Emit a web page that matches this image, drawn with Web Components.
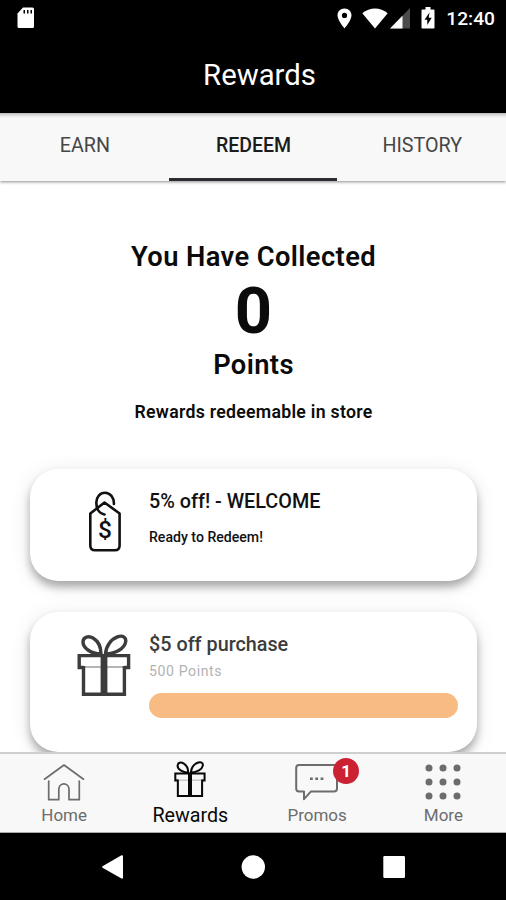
<!DOCTYPE html>
<html lang="en">
<head>
<meta charset="utf-8">
<title>Rewards</title>
<style>
	html, body {
		margin: 0;
		height: 100%;
		overflow: hidden;
		background: #fff;
		font-family: Roboto, "Liberation Sans", sans-serif;
	}
</style>
</head>
<body>
<rewards-app></rewards-app>

<script>
// shared icon markup
const icons = {
	gift: `
		<svg viewBox="0 0 54 62" preserveAspectRatio="none" fill="none" stroke="currentColor" stroke-width="3.4">
			<path d="M24 20C14 20 6 14 6 8C6 2.5 12 1.6 16 4C21 7 24 13 24 20Z"/>
			<path d="M28.5 20C29 12 34 5 41 2.6C46 1 49.5 3.5 48.6 8C47.5 14.5 39 19.5 28.5 20Z"/>
			<path d="M8 33H46" stroke="#b5b5b5" stroke-width="1.8"/>
			<path d="M6.5 33.5H2.2V21.6H51.6V33.5H47.4"/>
			<path d="M6.5 32V60.2H47.4V32"/>
			<path d="M27 20V61" stroke-width="6.8"/>
		</svg>`,
	tag: `
		<svg viewBox="0 0 54 64" fill="none" stroke="currentColor" stroke-width="2.6" stroke-linecap="round" stroke-linejoin="round">
			<path d="M27.5 12.5L42.6 23.5V55.5Q42.6 60.3 37.8 60.3H18.1Q13.3 60.3 13.3 55.5V23.5Z"/>
			<path d="M36.9 14C37.2 7.5 33 2.7 28 2.7C23 2.7 19.3 7 19.3 12.5C19.3 18.5 22 23.5 27.5 24.5"/>
			<text x="28" y="48" text-anchor="middle" font-size="24.5" font-weight="500" fill="currentColor" stroke="none">$</text>
		</svg>`,
	home: `
		<svg viewBox="0 0 42 38" fill="none" stroke="currentColor" stroke-width="1.7" stroke-linecap="round" stroke-linejoin="round">
			<path d="M1.5 16.2L21 2L40.5 16.2"/>
			<path d="M5.7 18V36.7H15.8V26.5C15.8 19 26 19 26 26.5V36.7H36.3V18"/>
		</svg>`,
	chat: `
		<svg viewBox="0 0 44 38" fill="none" stroke="currentColor" stroke-width="2" stroke-linejoin="round">
			<path d="M4 2H39Q42 2 42 5V25.5Q42 28.4 39 28.4H16L9 36.2V28.4H4Q1.2 28.4 1.2 25.5V5Q1.2 2 4 2Z"/>
			<path d="M15 15.7H17.8M20.3 15.7H23.1M25.6 15.7H28.4" stroke-width="2.4"/>
		</svg>`,
	more: `
		<svg viewBox="0 0 36 36" fill="currentColor">
			<circle cx="4" cy="4" r="3.5"/><circle cx="18" cy="4" r="3.5"/><circle cx="32" cy="4" r="3.5"/>
			<circle cx="4" cy="18" r="3.5"/><circle cx="18" cy="18" r="3.5"/><circle cx="32" cy="18" r="3.5"/>
			<circle cx="4" cy="32" r="3.5"/><circle cx="18" cy="32" r="3.5"/><circle cx="32" cy="32" r="3.5"/>
		</svg>`
};

// icon, sized by its parent
class AppIcon extends HTMLElement {
	constructor() {
		super();
		this.attachShadow({mode: 'open'});
	}
	connectedCallback() {
		this.shadowRoot.innerHTML = `
			<style>
				:host { display: block; }
				svg { display: block; width: 100%; height: 100%; }
			</style>
			${icons[this.getAttribute('name')]}
		`;
	}
}
customElements.define('app-icon', AppIcon);

// android status bar
class StatusBar extends HTMLElement {
	constructor() {
		super();
		this.attachShadow({mode: 'open'});
		this.shadowRoot.innerHTML = `
			<style>
				:host {
					display: flex;
					align-items: center;
					height: 36px;
					padding: 0 11px 0 17px;
					box-sizing: border-box;
					background: #000;
					color: #fff;
				}
				svg { display: block; fill: #fff; }
				.space { flex: 1; }
				.pin { margin-right: 10px; }
				.wifi { margin-right: 2px; }
				.signal { margin-right: 11px; }
				.battery { margin-right: 11px; }
				time { font-size: 19.2px; font-weight: 500; line-height: 37px; }
			</style>
			<svg width="18" height="22" viewBox="0 0 18 22">
				<path d="M6 .5H15.5Q17 .5 17 2V19.5Q17 21 15.5 21H2Q.5 21 .5 19.5V6.5Z"/>
				<path d="M6.5 3H8V6.5H6.5ZM10 3H11.5V6.5H10ZM13.5 3H15V6.5H13.5Z" fill="#000"/>
			</svg>
			<span class="space"></span>
			<svg class="pin" width="15" height="21" viewBox="0 0 15 21">
				<path fill-rule="evenodd" d="M7.5 .5C3.3 .5 .5 3.5 .5 7.3C.5 12.5 7.5 20.5 7.5 20.5S14.5 12.5 14.5 7.3C14.5 3.5 11.7 .5 7.5 .5ZM7.5 4.8A2.6 2.6 0 1 1 7.5 10A2.6 2.6 0 1 1 7.5 4.8Z"/>
			</svg>
			<svg class="wifi" width="26" height="21" viewBox="0 0 26 21">
				<path d="M.3 5.3C7.5-1 18.5-1 25.7 5.3L13 20.5Z"/>
			</svg>
			<svg class="signal" width="20" height="21" viewBox="0 0 20 21">
				<path d="M20 0V20.5H0Z" fill="#4c4c4c"/>
				<path d="M12.5 7.7V20.5H0Z"/>
			</svg>
			<svg class="battery" width="14" height="22" viewBox="0 0 14 22">
				<path d="M4.5 0H9.5V2.5H12.5Q13.5 2.5 13.5 3.5V20.5Q13.5 21.5 12.5 21.5H1.5Q.5 21.5 .5 20.5V3.5Q.5 2.5 1.5 2.5H4.5Z"/>
				<path d="M8.5 5.5L3.5 12.8H6.3V18L10.7 10.8H7.7Z" fill="#000"/>
			</svg>
			<time><slot></slot></time>
		`;
	}
}
customElements.define('status-bar', StatusBar);

// page title
class TitleBar extends HTMLElement {
	constructor() {
		super();
		this.attachShadow({mode: 'open'});
		this.shadowRoot.innerHTML = `
			<style>
				:host {
					display: block;
					height: 77px;
					padding-left: 13px;
					background: #000;
					color: #fff;
					font-size: 29.3px;
					line-height: 79px;
					text-align: center;
				}
			</style>
			<slot></slot>
		`;
	}
}
customElements.define('title-bar', TitleBar);

// one tab of the top row
class TopTab extends HTMLElement {
	constructor() {
		super();
		this.attachShadow({mode: 'open'});
		this.shadowRoot.innerHTML = `
			<style>
				:host {
					display: block;
					flex: 1;
					box-sizing: border-box;
					border-bottom: 3px solid transparent;
					padding-left: 1px;
					color: #464646;
					font-size: 19.7px;
					line-height: 66px;
					text-align: center;
				}
				:host([active]) {
					border-color: #2b2d30;
					color: #1c1c1c;
					font-size: 19.5px;
					font-weight: 500;
				}
			</style>
			<slot></slot>
		`;
	}
}
customElements.define('top-tab', TopTab);

// points balance
class PointsSummary extends HTMLElement {
	constructor() {
		super();
		this.attachShadow({mode: 'open'});
		this.shadowRoot.innerHTML = `
			<style>
				:host {
					display: block;
					padding: 58px 0 0 1px;
					color: #0b0b0b;
					text-align: center;
				}
				.label {
					font-size: 27.3px;
					font-weight: 600;
					line-height: 37px;
					letter-spacing: 0.4px;
				}
				.value {
					font-size: 65px;
					font-weight: 700;
					line-height: 70px;
				}
				.value + .label { padding-top: 1px; }
				.note {
					margin-top: 15px;
					font-size: 17.7px;
					font-weight: 600;
					line-height: 26px;
					letter-spacing: 0.28px;
				}
			</style>
			<div class="label">You Have Collected</div>
			<div class="value"><slot></slot></div>
			<div class="label">Points</div>
			<div class="note"><slot name="note"></slot></div>
		`;
	}
}
customElements.define('points-summary', PointsSummary);

// reward card
class RewardCard extends HTMLElement {
	constructor() {
		super();
		this.attachShadow({mode: 'open'});
	}
	connectedCallback() {
		const locked = this.hasAttribute('locked');
		this.shadowRoot.innerHTML = `
			<style>
				:host {
					display: flex;
					box-sizing: border-box;
					height: 112px;
					margin: 0 29px 0 30px;
					padding: 22px 19px 0 47px;
					border-radius: 28px;
					background: #fff;
					box-shadow: 0 6px 9px rgba(0,0,0,0.3), 0 3px 22px rgba(0,0,0,0.09);
					color: #111;
				}
				:host([locked]) { height: 140px; color: #3c3c3c; }
				app-icon { width: 54px; height: 62px; }
				:host(:not([locked])) app-icon { height: 64px; margin-top: -1px; }
				.text { flex: 1; margin-left: 18px; }
				.name { margin-top: -1px; font-size: 19.8px; font-weight: 500; line-height: 24px; }
				.info { margin-top: 12px; font-size: 14.1px; font-weight: 500; line-height: 22px; }
				:host([locked]) .info {
					margin-top: 3px;
					color: #b3b3b3;
					font-weight: 400;
					letter-spacing: 0.6px;
				}
				.bar {
					height: 25px;
					margin-top: 11px;
					border-radius: 13px;
					background: #f8bb84;
				}
			</style>
			<app-icon name="${this.getAttribute('icon')}"></app-icon>
			<div class="text">
				<div class="name"><slot></slot></div>
				<div class="info"><slot name="info"></slot></div>
				${locked ? '<div class="bar"></div>' : ''}
			</div>
		`;
	}
}
customElements.define('reward-card', RewardCard);

// item of the bottom menu
class NavItem extends HTMLElement {
	constructor() {
		super();
		this.attachShadow({mode: 'open'});
	}
	connectedCallback() {
		const badge = this.getAttribute('badge');
		this.shadowRoot.innerHTML = `
			<style>
				:host {
					display: flex;
					flex-direction: column;
					align-items: center;
					color: #6c6c6c;
					font-size: 17px;
				}
				:host([active]) { color: #080808; font-size: 19.7px; }
				.icon {
					position: relative;
					display: flex;
					align-items: center;
					justify-content: center;
					height: 38px;
					margin-top: 9px;
				}
				:host([active]) .icon { margin-top: 6px; margin-bottom: 3px; }
				app-icon { width: var(--w); height: var(--h); }
				.badge {
					position: absolute;
					left: 38px;
					top: -5px;
					width: 26px;
					height: 26px;
					border-radius: 50%;
					background: #cb2132;
					color: #fff;
					font-size: 17px;
					font-weight: 700;
					line-height: 26px;
					text-align: center;
				}
				.label { margin-top: 3px; line-height: 23px; }
			</style>
			<div class="icon">
				<app-icon name="${this.getAttribute('icon')}"></app-icon>
				${badge ? `<span class="badge">${badge}</span>` : ''}
			</div>
			<div class="label"><slot></slot></div>
		`;
	}
}
customElements.define('nav-item', NavItem);

// android buttons
class SystemNav extends HTMLElement {
	constructor() {
		super();
		this.attachShadow({mode: 'open'});
		this.shadowRoot.innerHTML = `
			<style>
				:host {
					display: flex;
					align-items: center;
					justify-content: center;
					gap: 117px;
					height: 67px;
					background: #000;
				}
				svg { display: block; width: 24px; height: 24px; fill: #fff; }
			</style>
			<svg viewBox="0 0 24 24"><path d="M21.5 .3Q23 0 23 1.5V22.5Q23 24 21.5 23.5L2.5 12.8Q1.5 12 2.5 11.2Z"/></svg>
			<svg viewBox="0 0 24 24"><circle cx="12.3" cy="12" r="11.7"/></svg>
			<svg viewBox="0 0 24 24"><rect x="1.3" y="1" width="21.7" height="22" rx="1.2"/></svg>
		`;
	}
}
customElements.define('system-nav', SystemNav);

// whole screen
class RewardsApp extends HTMLElement {
	constructor() {
		super();
		this.attachShadow({mode: 'open'});
		this.shadowRoot.innerHTML = `
			<style>
				:host {
					display: flex;
					flex-direction: column;
					height: 100vh;
				}
				.tabs {
					display: flex;
					flex: none;
					height: 68px;
					background: linear-gradient(#b8b8b8, #dcdcdc 2px, #f8f8f8 5px);
					box-shadow: 0 1px 3px rgba(0,0,0,0.45);
					z-index: 1;
				}
				main {
					flex: 1;
					min-height: 0;
					overflow: hidden;
				}
				.cards {
					display: flex;
					flex-direction: column;
					gap: 31px;
					margin-top: 44px;
				}
				.menu {
					display: grid;
					grid-template-columns: repeat(4, 1fr);
					flex: none;
					box-sizing: border-box;
					height: 81px;
					padding-left: 1px;
					border-top: 2px solid #cfcfcf;
					border-bottom: 1px solid #aaa;
					background: #f8f8f8;
				}
				.menu nav-item:nth-child(n+3) { padding-left: 1px; }
			</style>
			<status-bar>12:40</status-bar>
			<title-bar>Rewards</title-bar>
			<div class="tabs">
				<top-tab>EARN</top-tab>
				<top-tab active>REDEEM</top-tab>
				<top-tab>HISTORY</top-tab>
			</div>
			<main>
				<points-summary>0<span slot="note">Rewards redeemable in store</span></points-summary>
				<div class="cards">
					<reward-card icon="tag">5% off! - WELCOME<span slot="info">Ready to Redeem!</span></reward-card>
					<reward-card icon="gift" locked>$5 off purchase<span slot="info">500 Points</span></reward-card>
				</div>
			</main>
			<div class="menu">
				<nav-item icon="home" style="--w: 42px; --h: 38px">Home</nav-item>
				<nav-item icon="gift" style="--w: 32px; --h: 36px" active>Rewards</nav-item>
				<nav-item icon="chat" style="--w: 44px; --h: 38px" badge="1">Promos</nav-item>
				<nav-item icon="more" style="--w: 36px; --h: 36px">More</nav-item>
			</div>
			<system-nav></system-nav>
		`;
	}
}
customElements.define('rewards-app', RewardsApp);
</script>
</body>
</html>
